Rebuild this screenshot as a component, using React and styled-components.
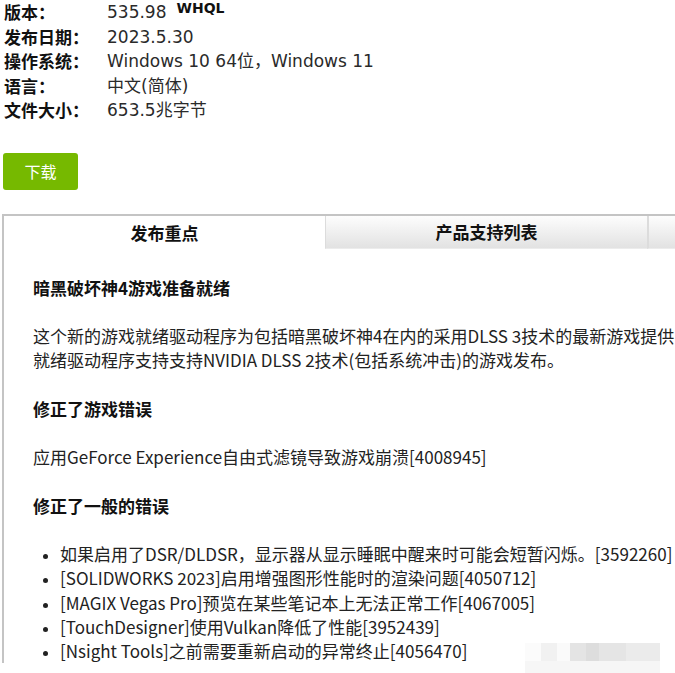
import React from 'react';
import styled, { createGlobalStyle } from 'styled-components';

const GlobalStyle = createGlobalStyle`
  html, body {
    margin: 0;
    padding: 0;
    background: #fff;
    overflow: hidden;
  }
  body {
    font-family: "Noto Sans CJK SC", "DejaVu Sans", sans-serif;
    color: #222;
  }
`;

const Page = styled.div`
  position: relative;
  width: 675px;
  height: 673px;
  overflow: hidden;
`;

const InfoList = styled.div`
  padding-left: 4px;
`;

const InfoRow = styled.div`
  display: flex;
  height: 24.5px;
  line-height: 24.5px;
  font-size: 17px;
  white-space: nowrap;
`;

const Label = styled.span`
  width: 103px;
  font-weight: 700;
  color: #111;
  font-family: "Noto Sans CJK SC", sans-serif;
`;

const Value = styled.span`
  font-family: "DejaVu Sans", "Noto Sans CJK SC", sans-serif;
  color: #2a2a2a;
`;

const Badge = styled.span`
  font-family: "DejaVu Sans", sans-serif;
  font-weight: 700;
  font-size: 14px;
  margin-left: 10px;
  color: #111;
  vertical-align: 5px;
  line-height: 0;
`;

const DownloadButton = styled.button`
  display: block;
  margin: 30px 0 0 3px;
  width: 75px;
  height: 37px;
  padding: 0;
  border: none;
  border-radius: 3px;
  background: #76b900;
  color: #fff;
  font-family: "Noto Sans CJK SC", sans-serif;
  font-size: 16px;
  cursor: pointer;
`;

const Panel = styled.div`
  margin: 24px 0 0 2px;
  width: 1100px;
  border-top: 2px solid #c4c4c4;
  border-left: 2px solid #c4c4c4;
`;

const Tabs = styled.div`
  display: flex;
  height: 33px;
`;

const Tab = styled.div`
  width: ${p => p.$width}px;
  flex-shrink: 0;
  display: flex;
  align-items: center;
  justify-content: center;
  font-size: 17px;
  font-weight: 700;
  color: #111;
  box-sizing: border-box;
  background: ${p => (p.$active ? '#fff' : 'linear-gradient(#fdfdfd, #e2e2e2)')};
  border-left: ${p => (p.$active ? 'none' : `${p.$divider}px solid #dcdcdc`)};
  border-bottom: ${p => (p.$active ? 'none' : '1px solid #ececec')};
`;

const Content = styled.div`
  padding: 27px 0 0 29px;
  font-size: 17px;
  line-height: 24px;
  white-space: nowrap;
  color: #222;
`;

const Heading = styled.h3`
  margin: 0 0 24.5px;
  font-size: 17px;
  font-weight: 700;
  line-height: 24px;
  color: #111;
`;

const Para = styled.p`
  margin: 0 0 24.5px;
`;

const List = styled.ul`
  margin: 0;
  padding-left: 27px;
  list-style: disc;
`;

const Item = styled.li`
  line-height: 24.3px;
  &::marker {
    font-size: 14px;
  }
`;

const Smudge = styled.div`
  position: absolute;
  left: 525px;
  top: 643px;
  width: 135px;
  height: 30px;
  background:
    linear-gradient(90deg, #fbfbfb 0 12%, #f0f0f0 12% 24%, #fafafa 24% 33%,
      #e2e2e2 33% 45%, #dadada 45% 55%, #e3e3e3 55% 75%, #e9e9e9 75% 100%);
  opacity: 0.9;
  &::after {
    content: '';
    position: absolute;
    left: 0;
    right: 0;
    bottom: 0;
    height: 12px;
    background: #f6f6f6;
  }
`;

const info = [
  ['版本：', '535.98', true],
  ['发布日期：', '2023.5.30'],
  ['操作系统：', 'Windows 10 64位，Windows 11'],
  ['语言：', '中文(简体)'],
  ['文件大小：', '653.5兆字节'],
];

const fixes = [
  '如果启用了DSR/DLDSR，显示器从显示睡眠中醒来时可能会短暂闪烁。[3592260]',
  '[SOLIDWORKS 2023]启用增强图形性能时的渲染问题[4050712]',
  '[MAGIX Vegas Pro]预览在某些笔记本上无法正常工作[4067005]',
  '[TouchDesigner]使用Vulkan降低了性能[3952439]',
  '[Nsight Tools]之前需要重新启动的异常终止[4056470]',
];

const App = () => {
  return (
    <Page>
      <GlobalStyle />
      <InfoList>
        {info.map(([label, value, whql]) => (
          <InfoRow key={label}>
            <Label>{label}</Label>
            <Value>
              {value}
              {whql && <Badge>WHQL</Badge>}
            </Value>
          </InfoRow>
        ))}
      </InfoList>
      <DownloadButton>下载</DownloadButton>
      <Panel>
        <Tabs>
          <Tab $active $width={321}>发布重点</Tab>
          <Tab $width={322} $divider={1}>产品支持列表</Tab>
          <Tab $width={321} $divider={2} />
        </Tabs>
        <Content>
          <Heading>暗黑破坏神4游戏准备就绪</Heading>
          <Para>
            这个新的游戏就绪驱动程序为包括暗黑破坏神4在内的采用DLSS 3技术的最新游戏提供了
            <br />
            就绪驱动程序支持支持NVIDIA DLSS 2技术(包括系统冲击)的游戏发布。
          </Para>
          <Heading>修正了游戏错误</Heading>
          <Para>应用GeForce Experience自由式滤镜导致游戏崩溃[4008945]</Para>
          <Heading>修正了一般的错误</Heading>
          <List>
            {fixes.map(f => (
              <Item key={f}>{f}</Item>
            ))}
          </List>
        </Content>
      </Panel>
      <Smudge />
    </Page>
  );
};

export default App;
